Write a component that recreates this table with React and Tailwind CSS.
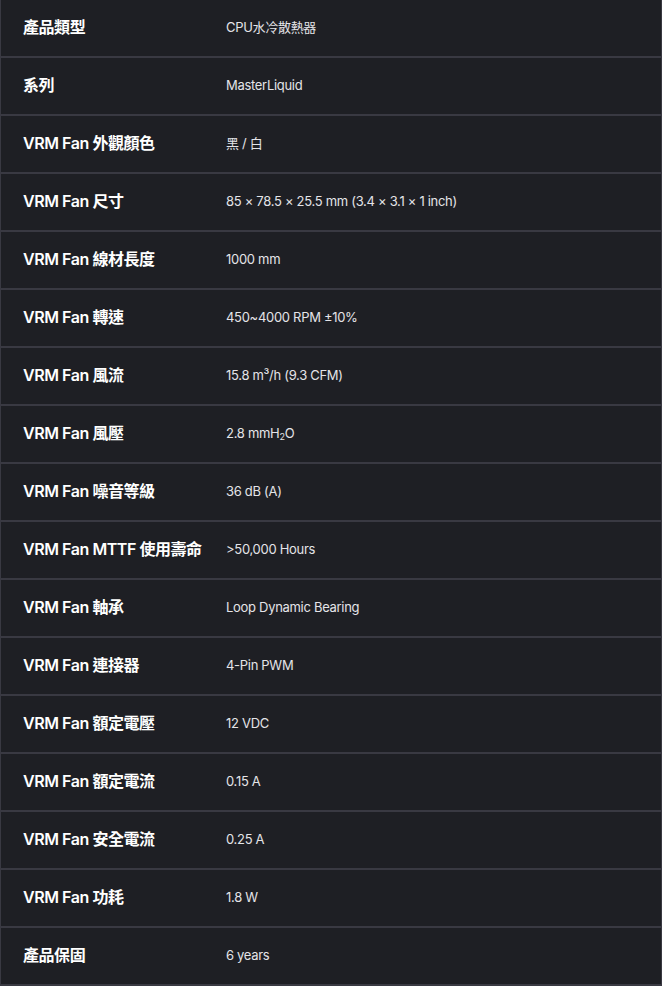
import React from "react";

const rows = [
  ["產品類型", "CPU水冷散熱器"],
  ["系列", "MasterLiquid"],
  ["VRM Fan 外觀顏色", "黑 / 白"],
  ["VRM Fan 尺寸", "85 × 78.5 × 25.5 mm (3.4 × 3.1 × 1 inch)"],
  ["VRM Fan 線材長度", "1000 mm"],
  ["VRM Fan 轉速", "450~4000 RPM ±10%"],
  ["VRM Fan 風流", "15.8 m³/h (9.3 CFM)"],
  ["VRM Fan 風壓", "H2O"],
  ["VRM Fan 噪音等級", "36 dB (A)"],
  ["VRM Fan MTTF 使用壽命", ">50,000 Hours"],
  ["VRM Fan 軸承", "Loop Dynamic Bearing"],
  ["VRM Fan 連接器", "4-Pin PWM"],
  ["VRM Fan 額定電壓", "12 VDC"],
  ["VRM Fan 額定電流", "0.15 A"],
  ["VRM Fan 安全電流", "0.25 A"],
  ["VRM Fan 功耗", "1.8 W"],
  ["產品保固", "6 years"],
];

export default function App() {
  return (
    <div
      className="w-[662px] h-[986px] bg-[#1e1f24] border-x border-[#393942] overflow-hidden"
      style={{ fontFamily: 'Inter, "Noto Sans CJK TC", sans-serif' }}
    >
      {rows.map(([label, value], i) => (
        <div
          key={i}
          className="flex items-center h-[58px] border-b-2 border-[#393942] pb-[2px]"
        >
          <div className="w-[225px] pl-[22px] text-[16px] font-semibold text-white leading-none tracking-[-0.45px]">
            {label}
          </div>
          <div className="flex-1 text-[13px] text-[#e4e4e8] leading-none tracking-[-0.3px]">
            {value === "H2O" ? (
              <span>
                2.8 mmH<sub className="text-[9px]">2</sub>O
              </span>
            ) : (
              value
            )}
          </div>
        </div>
      ))}
    </div>
  );
}
